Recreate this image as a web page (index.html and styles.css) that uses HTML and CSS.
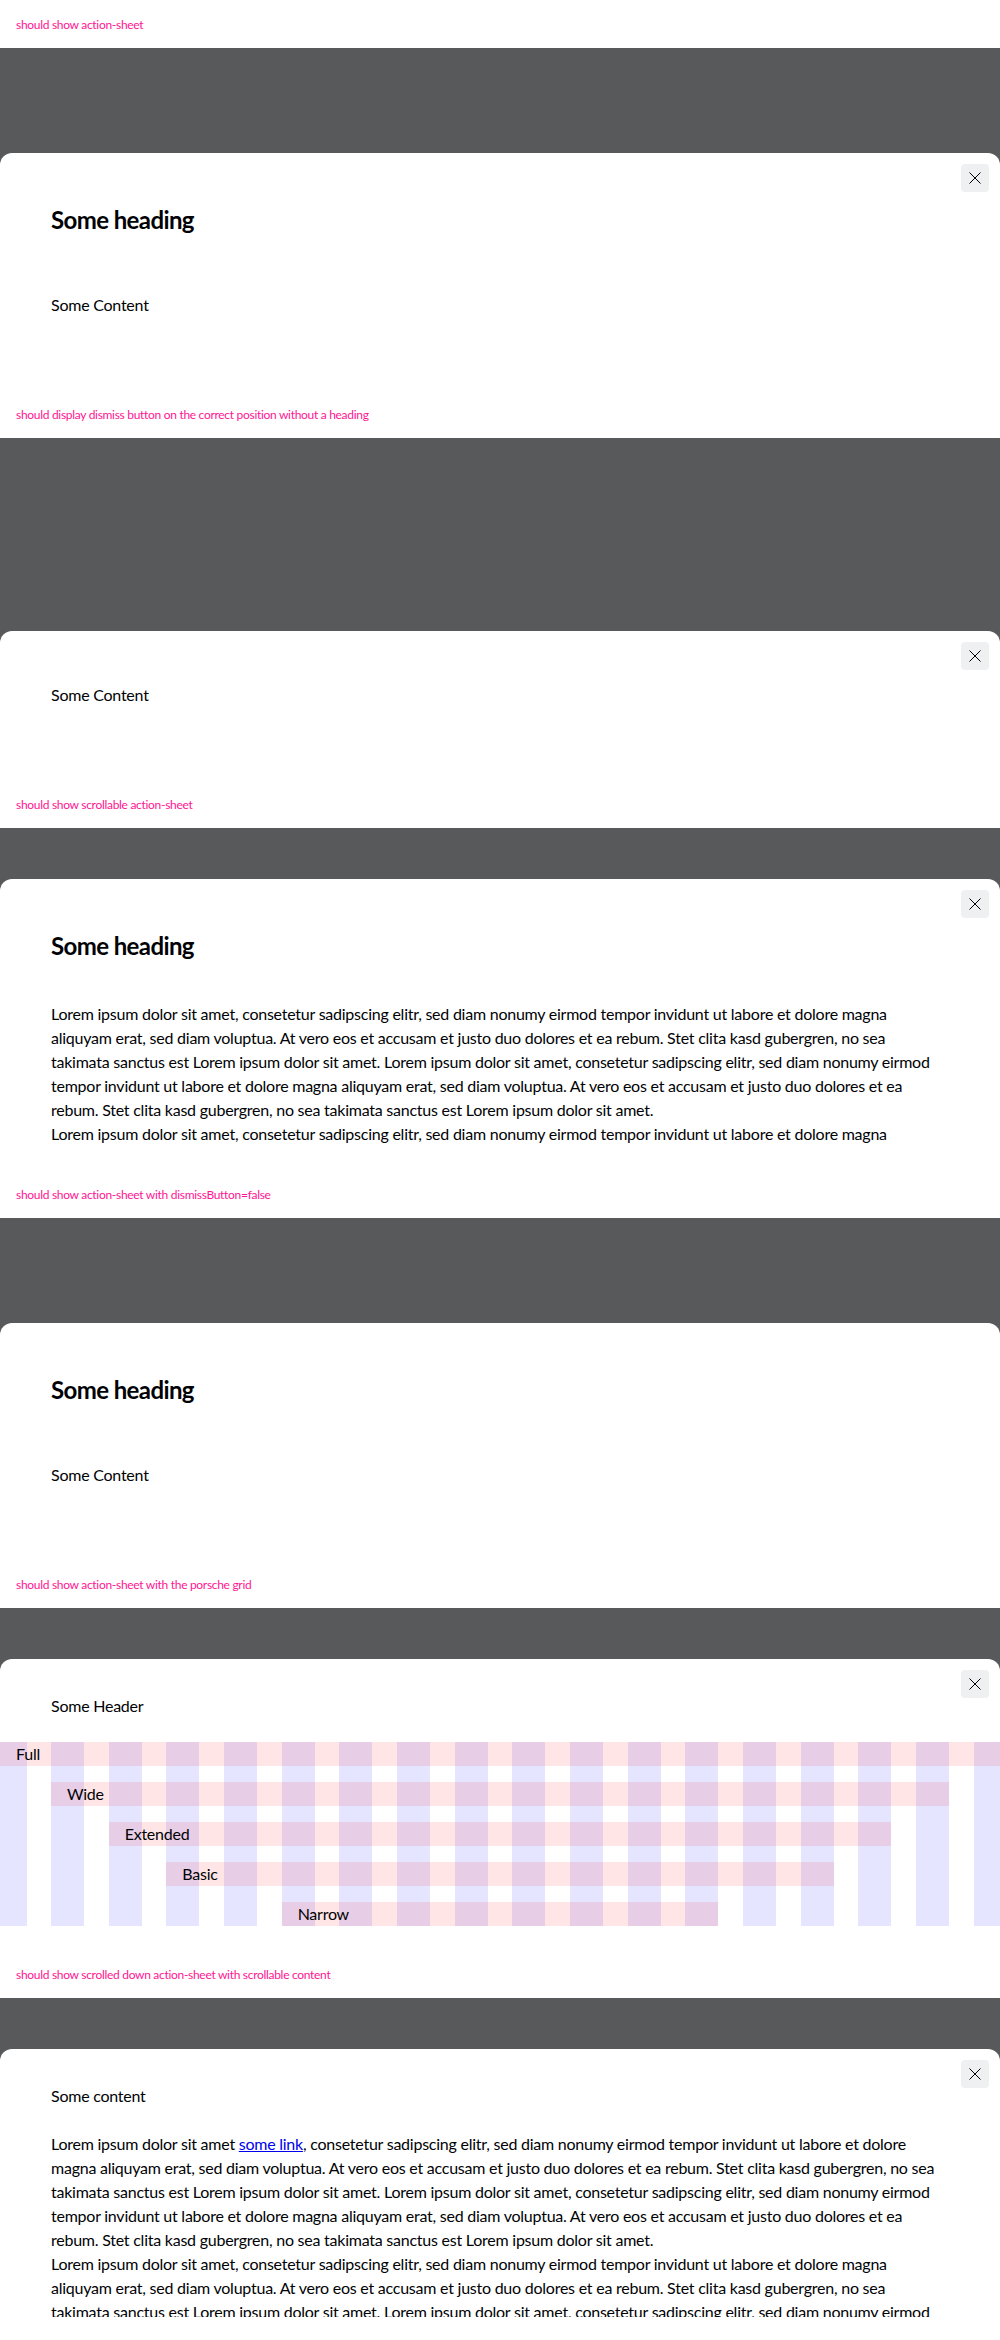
FILE: index.html
```html
<!DOCTYPE html>
<html lang="en">
<head>
<meta charset="utf-8">
<title>Action Sheet</title>
<link rel="stylesheet" href="styles.css">
</head>
<body>

<section class="story">
  <p class="caption">should show action-sheet</p>
  <div class="frame">
    <div class="sheet">
      <button class="dismiss" aria-label="Dismiss"><svg viewBox="0 0 12 12" width="12" height="12"><path d="M0.5 0.5 L11.5 11.5 M11.5 0.5 L0.5 11.5"/></svg></button>
      <div class="sheet__scroll">
        <h2 class="sheet__heading">Some heading</h2>
        <p class="sheet__text">Some Content</p>
      </div>
    </div>
  </div>
</section>

<section class="story">
  <p class="caption">should display dismiss button on the correct position without a heading</p>
  <div class="frame">
    <div class="sheet">
      <button class="dismiss" aria-label="Dismiss"><svg viewBox="0 0 12 12" width="12" height="12"><path d="M0.5 0.5 L11.5 11.5 M11.5 0.5 L0.5 11.5"/></svg></button>
      <div class="sheet__scroll sheet__scroll--plain">
        <p class="sheet__text">Some Content</p>
      </div>
    </div>
  </div>
</section>

<section class="story">
  <p class="caption">should show scrollable action-sheet</p>
  <div class="frame">
    <div class="sheet">
      <button class="dismiss" aria-label="Dismiss"><svg viewBox="0 0 12 12" width="12" height="12"><path d="M0.5 0.5 L11.5 11.5 M11.5 0.5 L0.5 11.5"/></svg></button>
      <div class="sheet__scroll">
        <h2 class="sheet__heading sheet__heading--tight">Some heading</h2>
        <p class="sheet__text">Lorem ipsum dolor sit amet, consetetur sadipscing elitr, sed diam nonumy eirmod tempor invidunt ut labore et dolore magna aliquyam erat, sed diam voluptua. At vero eos et accusam et justo duo dolores et ea rebum. Stet clita kasd gubergren, no sea takimata sanctus est Lorem ipsum dolor sit amet. Lorem ipsum dolor sit amet, consetetur sadipscing elitr, sed diam nonumy eirmod tempor invidunt ut labore et dolore magna aliquyam erat, sed diam voluptua. At vero eos et accusam et justo duo dolores et ea rebum. Stet clita kasd gubergren, no sea takimata sanctus est Lorem ipsum dolor sit amet.</p>
        <p class="sheet__text">Lorem ipsum dolor sit amet, consetetur sadipscing elitr, sed diam nonumy eirmod tempor invidunt ut labore et dolore magna aliquyam erat.</p>
      </div>
    </div>
  </div>
</section>

<section class="story">
  <p class="caption">should show action-sheet with dismissButton=false</p>
  <div class="frame">
    <div class="sheet">
      <div class="sheet__scroll">
        <h2 class="sheet__heading">Some heading</h2>
        <p class="sheet__text">Some Content</p>
      </div>
    </div>
  </div>
</section>

<section class="story">
  <p class="caption">should show action-sheet with the porsche grid</p>
  <div class="frame">
    <div class="sheet">
      <button class="dismiss" aria-label="Dismiss"><svg viewBox="0 0 12 12" width="12" height="12"><path d="M0.5 0.5 L11.5 11.5 M11.5 0.5 L0.5 11.5"/></svg></button>
      <div class="sheet__scroll sheet__scroll--compact">
        <p class="sheet__text sheet__header">Some Header</p>
        <div class="pgrid">
          <span class="pgrid__col"></span><span class="pgrid__col"></span><span class="pgrid__col"></span>
          <span class="pgrid__col"></span><span class="pgrid__col"></span><span class="pgrid__col"></span>
          <span class="pgrid__col"></span><span class="pgrid__col"></span><span class="pgrid__col"></span>
          <span class="pgrid__col"></span><span class="pgrid__col"></span><span class="pgrid__col"></span>
          <span class="pgrid__col"></span><span class="pgrid__col"></span><span class="pgrid__col"></span>
          <span class="pgrid__col"></span><span class="pgrid__col"></span><span class="pgrid__col"></span>
          <div class="pgrid__row pgrid__row--full">Full</div>
          <div class="pgrid__row pgrid__row--wide">Wide</div>
          <div class="pgrid__row pgrid__row--extended">Extended</div>
          <div class="pgrid__row pgrid__row--basic">Basic</div>
          <div class="pgrid__row pgrid__row--narrow">Narrow</div>
        </div>
      </div>
    </div>
  </div>
</section>

<section class="story">
  <p class="caption">should show scrolled down action-sheet with scrollable content</p>
  <div class="frame">
    <div class="sheet">
      <button class="dismiss" aria-label="Dismiss"><svg viewBox="0 0 12 12" width="12" height="12"><path d="M0.5 0.5 L11.5 11.5 M11.5 0.5 L0.5 11.5"/></svg></button>
      <div class="sheet__scroll sheet__scroll--compact">
        <p class="sheet__text sheet__header">Some content</p>
        <p class="sheet__text">Lorem ipsum dolor sit amet <a href="#">some link</a>, consetetur sadipscing elitr, sed diam nonumy eirmod tempor invidunt ut labore et dolore magna aliquyam erat, sed diam voluptua. At vero eos et accusam et justo duo dolores et ea rebum. Stet clita kasd gubergren, no sea takimata sanctus est Lorem ipsum dolor sit amet. Lorem ipsum dolor sit amet, consetetur sadipscing elitr, sed diam nonumy eirmod tempor invidunt ut labore et dolore magna aliquyam erat, sed diam voluptua. At vero eos et accusam et justo duo dolores et ea rebum. Stet clita kasd gubergren, no sea takimata sanctus est Lorem ipsum dolor sit amet.</p>
        <p class="sheet__text">Lorem ipsum dolor sit amet, consetetur sadipscing elitr, sed diam nonumy eirmod tempor invidunt ut labore et dolore magna aliquyam erat, sed diam voluptua. At vero eos et accusam et justo duo dolores et ea rebum. Stet clita kasd gubergren, no sea takimata sanctus est Lorem ipsum dolor sit amet. Lorem ipsum dolor sit amet, consetetur sadipscing elitr, sed diam nonumy eirmod tempor invidunt ut labore et dolore</p>
      </div>
    </div>
  </div>
</section>

</body>
</html>
```

FILE: styles.css
```css
* {
  box-sizing: border-box;
}

body {
  margin: 0;
  background: #ffffff;
  color: #010205;
  font-family: Lato, "Liberation Sans", sans-serif;
}

.story {
  display: flex;
  flex-direction: column;
}

.caption {
  margin: 0;
  height: 48px;
  padding: 0 16px;
  display: flex;
  align-items: center;
  font-size: 12px;
  letter-spacing: -0.025em;
  color: #ff1493;
}

.frame {
  height: 342px;
  background: #58595b;
  display: flex;
  flex-direction: column;
  justify-content: flex-end;
  overflow: hidden;
}

.sheet {
  position: relative;
  background: #ffffff;
  border-radius: 12px 12px 0 0;
  max-height: 291px;
  min-height: 0;
  display: flex;
  flex-direction: column;
  padding-bottom: 23px;
}

.sheet__scroll {
  flex: 0 1 auto;
  min-height: 0;
  overflow: hidden;
  padding: 51px 55px 50px 51px;
}

.sheet__scroll--plain {
  padding-top: 52px;
}

.sheet__scroll--compact {
  padding-top: 35px;
}

.sheet__heading {
  margin: 0 0 57px;
  font-size: 24px;
  line-height: 32px;
  font-weight: 700;
  letter-spacing: -0.025em;
}

.sheet__heading--tight {
  margin-bottom: 40px;
}

.sheet__text {
  margin: 0;
  font-size: 16px;
  line-height: 24px;
  letter-spacing: -0.015em;
}

.sheet__header {
  margin-bottom: 24px;
}

.sheet__text a {
  color: #0000ee;
}

.dismiss {
  position: absolute;
  top: 11px;
  right: 11px;
  width: 28px;
  height: 28px;
  padding: 0;
  border: 0;
  border-radius: 4px;
  background: #eff0f1;
  display: flex;
  align-items: center;
  justify-content: center;
  z-index: 1;
}

.dismiss svg {
  display: block;
  fill: none;
  stroke: #010205;
  stroke-width: 1;
}

.pgrid {
  margin: 0 -55px 0 -51px;
  display: grid;
  grid-template-columns: 26.5px repeat(16, minmax(0, 1fr)) 26.5px;
  grid-template-rows: repeat(5, 24px);
  column-gap: 24.5px;
  row-gap: 16px;
}

.pgrid__col {
  grid-row: 1 / -1;
  background: rgba(0, 0, 255, 0.1);
}

.pgrid__col:nth-child(1) { grid-column: 1; }
.pgrid__col:nth-child(2) { grid-column: 2; }
.pgrid__col:nth-child(3) { grid-column: 3; }
.pgrid__col:nth-child(4) { grid-column: 4; }
.pgrid__col:nth-child(5) { grid-column: 5; }
.pgrid__col:nth-child(6) { grid-column: 6; }
.pgrid__col:nth-child(7) { grid-column: 7; }
.pgrid__col:nth-child(8) { grid-column: 8; }
.pgrid__col:nth-child(9) { grid-column: 9; }
.pgrid__col:nth-child(10) { grid-column: 10; }
.pgrid__col:nth-child(11) { grid-column: 11; }
.pgrid__col:nth-child(12) { grid-column: 12; }
.pgrid__col:nth-child(13) { grid-column: 13; }
.pgrid__col:nth-child(14) { grid-column: 14; }
.pgrid__col:nth-child(15) { grid-column: 15; }
.pgrid__col:nth-child(16) { grid-column: 16; }
.pgrid__col:nth-child(17) { grid-column: 17; }
.pgrid__col:nth-child(18) { grid-column: 18; }

.pgrid__row {
  background: rgba(255, 0, 0, 0.1);
  padding-left: 16px;
  font-size: 16px;
  line-height: 24px;
  letter-spacing: -0.015em;
}

.pgrid__row--full { grid-row: 1; grid-column: 1 / 19; }
.pgrid__row--wide { grid-row: 2; grid-column: 2 / 18; }
.pgrid__row--extended { grid-row: 3; grid-column: 3 / 17; }
.pgrid__row--basic { grid-row: 4; grid-column: 4 / 16; }
.pgrid__row--narrow { grid-row: 5; grid-column: 6 / 14; }
```
